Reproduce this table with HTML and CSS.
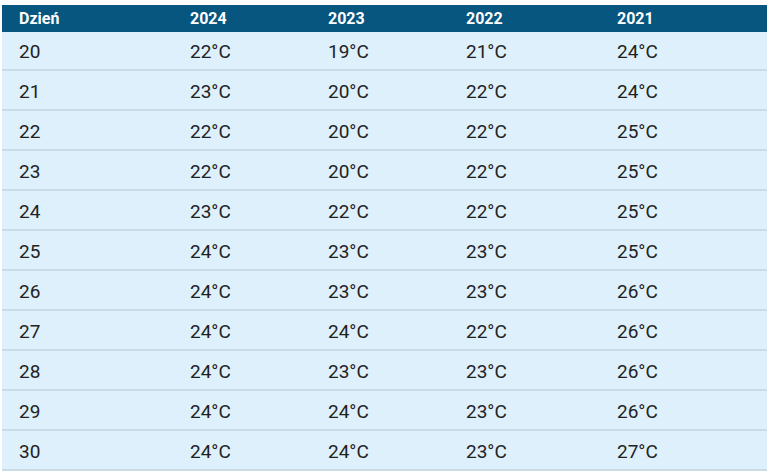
FILE: index.html
```html
<!DOCTYPE html>
<html lang="pl">
<head>
<meta charset="utf-8">
<link rel="stylesheet" href="styles.css">
</head>
<body>
<div class="table">
  <div class="row head"><div>Dzień</div><div>2024</div><div>2023</div><div>2022</div><div>2021</div></div>
  <div class="row"><div>20</div><div>22°C</div><div>19°C</div><div>21°C</div><div>24°C</div></div>
  <div class="row"><div>21</div><div>23°C</div><div>20°C</div><div>22°C</div><div>24°C</div></div>
  <div class="row"><div>22</div><div>22°C</div><div>20°C</div><div>22°C</div><div>25°C</div></div>
  <div class="row"><div>23</div><div>22°C</div><div>20°C</div><div>22°C</div><div>25°C</div></div>
  <div class="row"><div>24</div><div>23°C</div><div>22°C</div><div>22°C</div><div>25°C</div></div>
  <div class="row"><div>25</div><div>24°C</div><div>23°C</div><div>23°C</div><div>25°C</div></div>
  <div class="row"><div>26</div><div>24°C</div><div>23°C</div><div>23°C</div><div>26°C</div></div>
  <div class="row"><div>27</div><div>24°C</div><div>24°C</div><div>22°C</div><div>26°C</div></div>
  <div class="row"><div>28</div><div>24°C</div><div>23°C</div><div>23°C</div><div>26°C</div></div>
  <div class="row"><div>29</div><div>24°C</div><div>24°C</div><div>23°C</div><div>26°C</div></div>
  <div class="row"><div>30</div><div>24°C</div><div>24°C</div><div>23°C</div><div>27°C</div></div>
</div>
</body>
</html>
```
FILE: styles.css
```css
html, body {
  margin: 0;
  padding: 0;
  background: #ffffff;
}
body {
  padding: 5px 6px 0 2px;
  font-family: Roboto, "Liberation Sans", sans-serif;
}
.table {
  width: 765px;
}
.row {
  display: grid;
  grid-template-columns: 171px 138px 138px 151px 167px;
  height: 38px;
  align-items: center;
  background: #ddf0fc;
  border-bottom: 2px solid #c9dce6;
  color: #222222;
  font-size: 19px;
}
.row > div {
  padding-left: 17px;
  padding-top: 2px;
}
.row.head {
  height: 27px;
  background: #06567f;
  border-bottom: none;
  color: #ffffff;
  font-size: 16px;
  font-weight: 700;
}
.row.head > div {
  padding-top: 0;
}
.row.head + .row {
  height: 37px;
}
```
